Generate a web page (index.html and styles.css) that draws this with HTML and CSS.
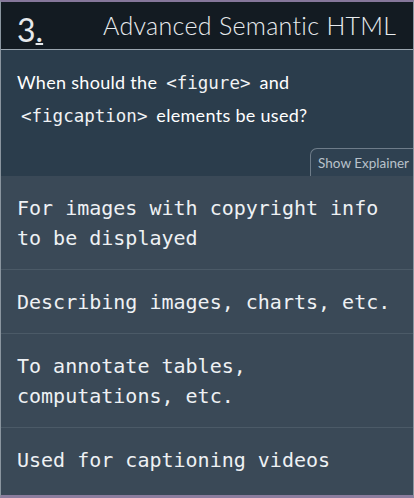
FILE: index.html
```html
<!DOCTYPE html>
<html>
<head>
<meta charset="utf-8">
<link rel="stylesheet" href="styles.css">
</head>
<body>
<div class="card">
  <header class="head">
    <span class="num">3<u>.</u></span>
    <h1 class="title">Advanced Semantic HTML</h1>
  </header>
  <section class="question">
    <p class="q-text">When should the <code>&lt;figure&gt;</code> and <code>&lt;figcaption&gt;</code> elements be used?</p>
    <div class="tab-row"><button class="tab">Show Explainer</button></div>
  </section>
  <ul class="answers">
    <li class="answer">For images with copyright info to be displayed</li>
    <li class="answer">Describing images, charts, etc.</li>
    <li class="answer">To annotate tables, computations, etc.</li>
    <li class="answer">Used for captioning videos</li>
  </ul>
</div>
</body>
</html>
```
FILE: styles.css
```css
html, body {
  margin: 0;
  padding: 0;
  background: #3a4957;
}
.card {
  box-sizing: border-box;
  width: 414px;
  height: 498px;
  border-top: 2px solid #85779a;
  border-bottom: 3px solid #8c7d9e;
  border-left: 1px solid #8a959f;
  border-right: 1px solid #8a959f;
  display: flex;
  flex-direction: column;
  overflow: hidden;
  font-family: Lato, "Open Sans", sans-serif;
  color: #f2f4f6;
}
.head {
  height: 47px;
  background: #131b22;
  border-bottom: 1px solid #9aa5af;
  display: flex;
  align-items: center;
  padding: 0 16px;
}
.num {
  font-size: 32px;
  line-height: 46px;
  color: #e6e9ec;
  width: 86px;
  margin-top: 8px;
}
.num u {
  text-decoration-thickness: 2px;
  text-underline-offset: 1px;
}
.title {
  margin: 0;
  font-size: 25px;
  font-weight: 300;
  color: #e8ebee;
  letter-spacing: 0.3px;
  margin-top: -1px;
}
.question {
  background: #2b3d4c;
  height: 126px;
  display: flex;
  flex-direction: column;
  justify-content: space-between;
}
.q-text {
  margin: 0;
  padding: 16px 16px 0;
  font-size: 18px;
  line-height: 32px;
  letter-spacing: 0.3px;
  color: #ffffff;
}
.q-text code {
  font-family: "DejaVu Sans Mono", monospace;
  font-size: 17.5px;
  letter-spacing: 0;
  padding: 0 4px;
  color: #f0f2f4;
}
.tab-row {
  display: flex;
  justify-content: flex-end;
}
.tab {
  background: #2f4151;
  border: 1px solid #6e7c89;
  border-bottom: none;
  border-right: none;
  border-radius: 7px 0 0 0;
  height: 28px;
  padding: 0 4px 0 7px;
  font-family: Lato, "Open Sans", sans-serif;
  font-size: 13.5px;
  color: #b9c2cb;
  cursor: pointer;
}
.answers {
  list-style: none;
  margin: 0;
  padding: 0;
  flex: 1;
  background: #3a4957;
}
.answer {
  font-family: "DejaVu Sans Mono", monospace;
  font-size: 20px;
  line-height: 30px;
  padding: 17px 16px 16px;
  border-bottom: 1px solid #4b5a67;
  color: #eef1f4;
}
.answer:last-child {
  border-bottom: none;
}
```
